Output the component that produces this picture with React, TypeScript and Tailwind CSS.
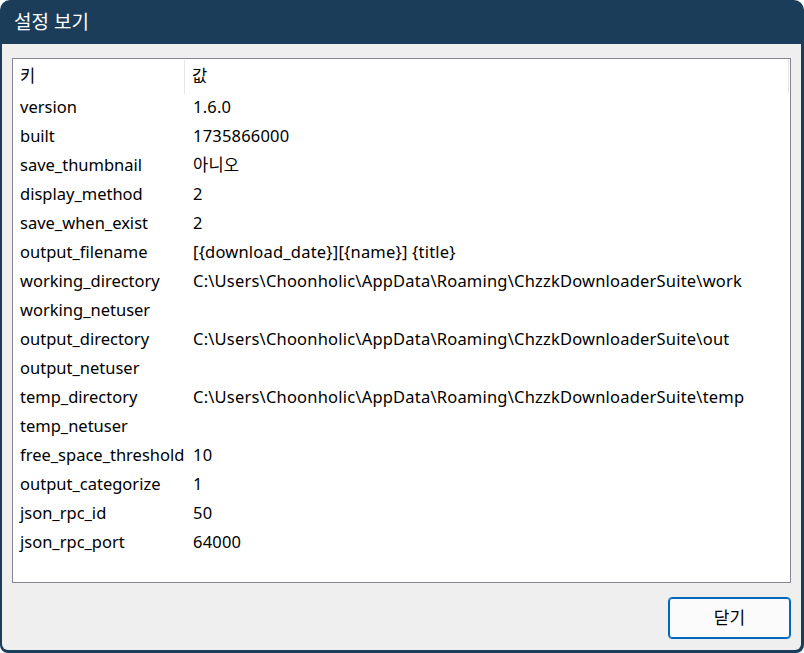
import React from "react";

const rows: [string, string][] = [
  ["version", "1.6.0"],
  ["built", "1735866000"],
  ["save_thumbnail", "아니오"],
  ["display_method", "2"],
  ["save_when_exist", "2"],
  ["output_filename", "[{download_date}][{name}] {title}"],
  ["working_directory", "C:\\Users\\Choonholic\\AppData\\Roaming\\ChzzkDownloaderSuite\\work"],
  ["working_netuser", ""],
  ["output_directory", "C:\\Users\\Choonholic\\AppData\\Roaming\\ChzzkDownloaderSuite\\out"],
  ["output_netuser", ""],
  ["temp_directory", "C:\\Users\\Choonholic\\AppData\\Roaming\\ChzzkDownloaderSuite\\temp"],
  ["temp_netuser", ""],
  ["free_space_threshold", "10"],
  ["output_categorize", "1"],
  ["json_rpc_id", "50"],
  ["json_rpc_port", "64000"],
];

export default function App() {
  return (
    <div
      className="w-[804px] h-[653px] bg-[#1b3d5a] rounded-t-[10px] rounded-b-[8px] flex flex-col overflow-hidden"
      style={{ fontFamily: '"Noto Sans", "Noto Sans CJK KR", sans-serif' }}
    >
      <div className="h-[44px] shrink-0 flex items-center pl-[14px] text-white text-[19px]">
        설정 보기
      </div>
      <div className="flex-1 mx-[2px] mr-[3px] mb-[3px] bg-[#efefef] rounded-b-[6px] flex flex-col px-[10px] pt-[14px]">
        <div className="h-[525px] border border-[#868690] bg-white flex flex-col">
          <div className="h-[34px] flex items-center text-[16.5px] text-black shrink-0">
            <div className="w-[172px] pl-[7px] h-full flex items-center border-r border-[#e5e5e5] mt-[1px]">키</div>
            <div className="flex-1 pl-[7px] h-full flex items-center border-r border-[#e5e5e5] mr-[1px]">값</div>
          </div>
          {rows.map(([k, v]) => (
            <div key={k} className="h-[29px] flex items-center text-[16.5px] text-black whitespace-nowrap">
              <div className="w-[173px] pl-[7px]">{k}</div>
              <div className="flex-1 pl-[7px] tracking-[0.2px]">{v}</div>
            </div>
          ))}
        </div>
        <div className="flex justify-end mt-[14px]">
          <button className="w-[123px] h-[42px] border border-[#0067c0] rounded-[4px] bg-[#fbfbfb] text-[17px] text-black shadow-[inset_0_0_0_1px_#0067c0]">
            닫기
          </button>
        </div>
      </div>
    </div>
  );
}
